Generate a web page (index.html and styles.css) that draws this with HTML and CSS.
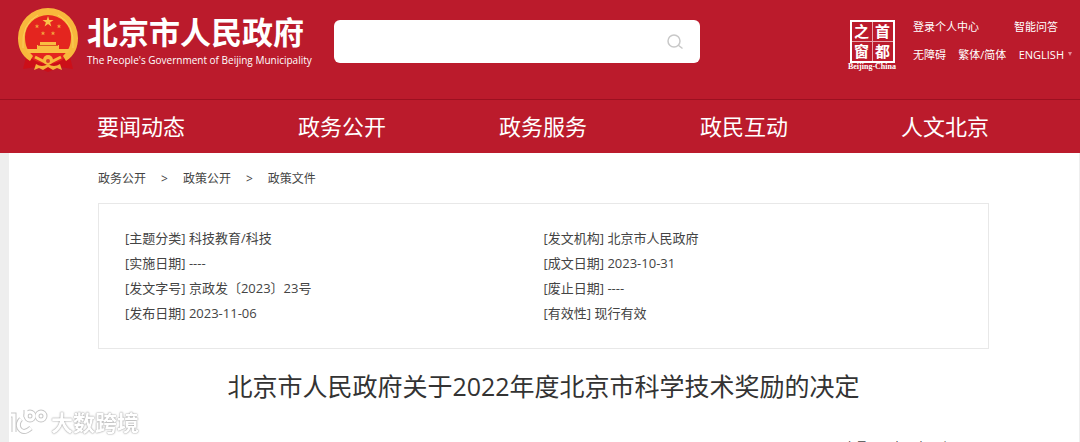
FILE: index.html
```html
<!DOCTYPE html>
<html lang="zh-CN">
<head>
    <meta charset="UTF-8">
    <meta name="viewport" content="width=device-width, initial-scale=1.0">
    <title>北京市人民政府关于2022年度北京市科学技术奖励的决定</title>
    <link rel="stylesheet" href="styles.css">
</head>
<body>
    <header>
        <div class="top">
            <a class="brand" href="#">
                <!-- National emblem -->
                <svg class="emblem" viewBox="0 0 60 64" aria-hidden="true">
                    <path d="M9 45 L5 61 L18 59 L30 64 L42 59 L55 61 L51 45Z" fill="#cc0f18"/>
                    <circle cx="30" cy="30" r="26" fill="#e4251f"/>
                    <path d="M12 53 C3 47 0 39 0 30 A30 30 0 0 1 60 30 C60 39 57 47 48 53 L45 48 C51 42 53 37 53 29 A23 22 0 0 0 7 29 C7 37 9 42 15 48Z" fill="#f8b83c"/>
                    <path d="M5 40 Q3 16 20 7 M55 40 Q57 16 40 7" fill="none" stroke="#fbd05c" stroke-width="1"/>
                    <path d="M30 8 L31.3 12 H35.5 L32.1 14.5 L33.4 18.5 L30 16 L26.6 18.5 L27.9 14.5 L24.5 12 H28.7Z" fill="#fbc14a"/>
                    <g fill="#f3a23c">
                        <path id="star" d="M19 16 L19.6 17.5 H21.2 L20 18.6 L20.5 20.2 L19 19.2 L17.5 20.2 L18 18.6 L16.8 17.5 H18.4Z"/>
                        <use href="#star" x="22"/>
                        <use href="#star" x="6" y="7"/>
                        <use href="#star" x="16" y="7"/>
                    </g>
                    <path d="M22 34 H38 V37 H41 V41 H52 L50 45 H10 L8 41 H19 V37 H22Z" fill="#f9bd42"/>
                    <path d="M20 37.5 H40" stroke="#dd5a24" stroke-width="1"/>
                    <path d="M17 49 L27 54 M43 49 L33 54" fill="none" stroke="#f8b83c" stroke-width="3"/>
                    <circle cx="30" cy="52" r="5" fill="#f8b83c"/>
                    <circle cx="30" cy="53" r="2" fill="#d8402a"/>
                    <path d="M18 56 Q24 60 30 56 Q36 60 42 56 L44 62 L39 60 L35 62 L30 59 L25 62 L21 60 L16 62Z" fill="#f6b33b"/>
                </svg>
                <span class="names">
                    <strong>北京市人民政府</strong>
                    <span>The People's Government of Beijing Municipality</span>
                </span>
            </a>

            <form class="search">
                <input type="text" aria-label="搜索">
                <button type="button" aria-label="搜索">
                    <svg viewBox="0 0 18 16" width="18" height="16" fill="none" stroke="#c8c8c8" stroke-width="1.5">
                        <circle cx="8" cy="7" r="6"/>
                        <path d="M12 11 L16.5 14.5"/>
                    </svg>
                </button>
            </form>

            <a class="seal" href="#">
                <span class="seal-grid">
                    <span>之</span><span>首</span>
                    <span>窗</span><span>都</span>
                </span>
                <span class="seal-name">Beijing-China</span>
            </a>

            <div class="tools">
                <div class="tools-row">
                    <a href="#">登录个人中心</a>
                    <a href="#">智能问答</a>
                </div>
                <div class="tools-row">
                    <a href="#">无障碍</a>
                    <a href="#">繁体/简体</a>
                    <a class="lang" href="#">ENGLISH</a>
                </div>
            </div>
        </div>

        <nav>
            <a href="#">要闻动态</a>
            <a href="#">政务公开</a>
            <a href="#">政务服务</a>
            <a href="#">政民互动</a>
            <a href="#">人文北京</a>
        </nav>
    </header>

    <main>
        <div class="crumbs">
            <a href="#">政务公开</a>
            <span>&gt;</span>
            <a href="#">政策公开</a>
            <span>&gt;</span>
            <a href="#">政策文件</a>
        </div>

        <!-- Document details -->
        <ul class="info">
            <li>[主题分类] 科技教育/科技</li>
            <li>[发文机构] 北京市人民政府</li>
            <li>[实施日期] ----</li>
            <li>[成文日期] 2023-10-31</li>
            <li>[发文字号] 京政发〔2023〕23号</li>
            <li>[废止日期] ----</li>
            <li>[发布日期] 2023-11-06</li>
            <li>[有效性] 现行有效</li>
        </ul>

        <h1>北京市人民政府关于2022年度北京市科学技术奖励的决定</h1>

        <div class="font-size">
            <span>字号:</span>
            <a href="#">大</a>
            <a href="#">中</a>
            <a href="#">小</a>
        </div>
    </main>

    <div class="watermark">
        <svg viewBox="0 0 40 28" width="40" height="28" fill="none" aria-hidden="true">
            <g stroke="#c6c6c6" stroke-width="5">
                <path d="M2 7 H5 V24"/>
                <path d="M12 11 Q8 15 10 20 Q14 27 22 20"/>
                <path d="M17 2 V9"/>
                <circle cx="21" cy="8" r="4"/>
                <circle cx="32" cy="8" r="4"/>
            </g>
            <g stroke="#fff" stroke-width="3">
                <path d="M2 7 H5 V24"/>
                <path d="M12 11 Q8 15 10 20 Q14 27 22 20"/>
                <path d="M17 2 V9"/>
                <circle cx="21" cy="8" r="4"/>
                <circle cx="32" cy="8" r="4"/>
            </g>
        </svg>
        <span>大数跨境</span>
    </div>
</body>
</html>
```
FILE: styles.css
```css
* {
    box-sizing: border-box;
}

body {
    margin: 0;
    background-color: #eee;
    color: #444;
    font-family: "Open Sans", "Noto Sans CJK SC", sans-serif;
    font-size: 12px;
}

a {
    color: inherit;
    text-decoration: none;
}

header {
    background-color: #bb1b2c;
    color: #fff;
}

.top {
    display: flex;
    align-items: flex-start;
    height: 100px;
    padding: 0 8px 0 18px;
    border-bottom: 1px solid #9c1020;
}

.brand {
    display: flex;
    margin-top: 8px;
    gap: 9px;
}

.emblem {
    width: 60px;
    height: 64px;
}

.names {
    display: flex;
    flex-direction: column;
    width: 220px;
    margin-top: 4px;
    font-size: 10px;
    line-height: 16px;
    white-space: nowrap;
}

.names strong {
    font-size: 31px;
    line-height: 40px;
}

.search {
    display: flex;
    align-items: center;
    flex: 0 1 366px;
    height: 43px;
    margin: 20px auto 0 27px;
    background-color: #fff;
    border-radius: 6px;
}

.search input {
    flex: 1;
    min-width: 0;
    height: 100%;
    padding: 0 16px;
    border: none;
    outline: none;
    background: none;
    font-size: 14px;
}

.search button {
    display: flex;
    padding: 0;
    margin-right: 16px;
    border: none;
    background: none;
    cursor: pointer;
}

.seal {
    display: flex;
    flex-direction: column;
    align-items: center;
    width: 50px;
    margin: 20px 16px 0 0;
}

.seal-grid {
    display: grid;
    grid-template-columns: 1fr 1fr;
    gap: 1px;
    width: 45px;
    border: 2px solid #fff;
    background-color: #e9a5ad;
}

.seal-grid span {
    background-color: #bb1b2c;
    font-size: 15px;
    font-weight: bold;
    line-height: 19px;
    text-align: center;
}

.seal-name {
    font-family: "Liberation Serif", serif;
    font-size: 8px;
    font-weight: bold;
    line-height: 8px;
    white-space: nowrap;
}

.tools {
    display: flex;
    flex-direction: column;
    gap: 12px;
    width: 159px;
    margin-top: 19px;
    font-size: 11px;
    line-height: 16px;
    white-space: nowrap;
}

.tools-row {
    display: flex;
    justify-content: space-between;
}

.tools-row:first-child {
    padding-right: 14px;
}

.lang::after {
    content: "";
    display: inline-block;
    margin: 0 0 3px 4px;
    border: 2px solid transparent;
    border-top: 4px solid #e58a94;
    border-bottom: none;
}

nav {
    display: flex;
    justify-content: space-between;
    padding: 0 91px 0 97px;
    font-size: 22px;
    line-height: 53px;
}

main {
    margin: 0 1px 0 9px;
    padding: 0 90px 12px 89px;
    background-color: #fff;
}

.crumbs {
    display: flex;
    gap: 15px;
    padding: 16px 0 14px;
    line-height: 20px;
}

.info {
    display: grid;
    grid-template-columns: 1fr 1fr;
    margin: 0;
    padding: 22px 26px;
    border: 1px solid #e8e8e8;
    list-style: none;
    font-size: 13px;
    line-height: 25px;
}

h1 {
    margin: 18px 0 0;
    color: #333;
    font-size: 25px;
    font-weight: normal;
    line-height: 38px;
    text-align: center;
}

.font-size {
    display: flex;
    justify-content: flex-end;
    gap: 12px;
    margin-top: 33px;
    padding-right: 38px;
    line-height: 20px;
}

.font-size span {
    margin-right: 8px;
}

.watermark {
    position: fixed;
    left: 9px;
    bottom: 6px;
    display: flex;
    gap: 2px;
    color: #fff;
    font-size: 22px;
    font-weight: bold;
    line-height: 28px;
    text-shadow: 0 0 2px #999, 0 0 1px #aaa;
}
```
